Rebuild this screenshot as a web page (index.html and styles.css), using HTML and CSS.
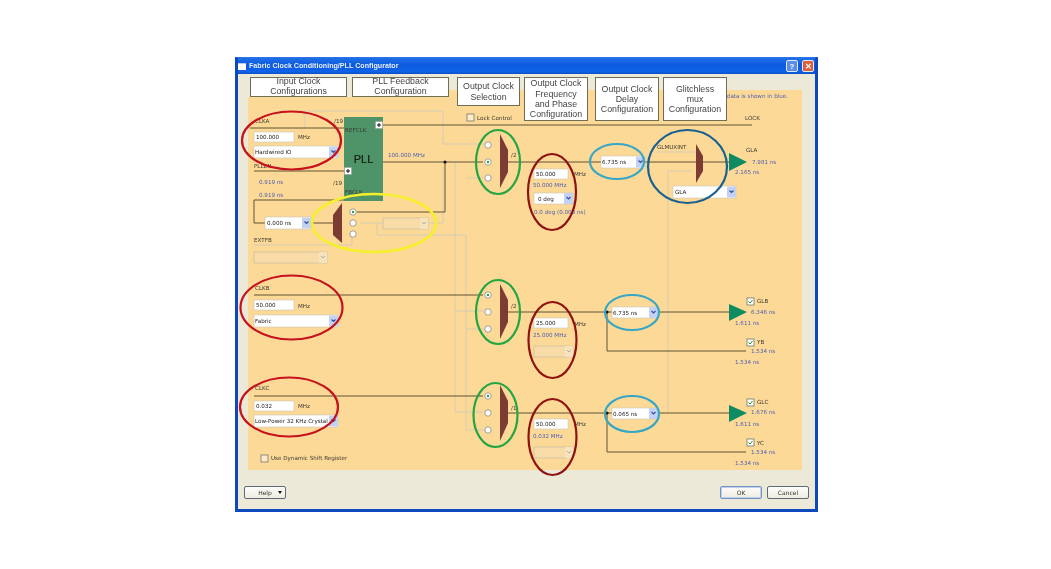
FILE: index.html
```html
<!DOCTYPE html>
<html lang="en">
<head>
<meta charset="utf-8">
<title>Fabric Clock Conditioning/PLL Configurator</title>
<link rel="stylesheet" href="styles.css">
</head>
<body>
<div class="window">
  <div class="titlebar">
    <span class="app-icon"></span>
    <span class="title">Fabric Clock Conditioning/PLL Configurator</span>
    <span class="cap cap-help">?</span>
    <span class="cap cap-close">✕</span>
  </div>
  <div class="client">
    <div class="canvas">
      <svg class="diagram" width="577" height="404" viewBox="238 74 577 404" xmlns="http://www.w3.org/2000/svg">
        <defs>
          <g id="arrow"><rect class="btn" x="-9" y="0" width="9" height="11"/><path class="chev" d="M-6.5 4l2 2 2-2"/></g>
          <g id="arrowd"><rect class="btn-off" x="-8" y="0" width="8" height="11"/><path class="chev-off" d="M-6 4l2 2 2-2"/></g>
          <g id="radio"><circle class="radio" r="3.2"/></g>
          <g id="radioon"><circle class="radio" r="3.2"/><circle class="radio-dot" r="1.2"/></g>
          <g id="check"><rect class="check" width="7" height="7" x="0" y="0"/><path class="tick" d="M1.5 3.5l1.5 1.5 2.5-3"/></g>
          <g id="plus"><rect class="plusbox" x="-3.5" y="-3.5" width="7" height="7"/><path class="plusmark" d="M-2 0h4M0-2v4"/></g>
        </defs>

        <path class="panel" d="M248 97H449V90H802V470H248Z"/>

        <!-- light routing -->
        <g class="wire-light">
          <path d="M305 128V111H443V144H483"/>
          <path d="M360 223H383M428 223H443V167"/>
          <path d="M254 245H352V236"/>
          <path d="M377 223V235H466V430H483"/>
          <path d="M466 178H483"/>
          <path d="M455 162V412H483M455 311H483M466 329H483"/>
          <path d="M657 152H696"/>
          <path d="M692 171H668V412"/>
        </g>

        <!-- dark routing -->
        <g class="wire">
          <path d="M250 128H344M379 125H752"/>
          <path d="M254 171H344"/>
          <path d="M383 162H483M508 162H729"/>
          <path d="M445 162V212H357"/>
          <path d="M344 200H254V223H265M311 223H333"/>
          <path d="M254 295H483M508 312H729M607 312V351H746"/>
          <path d="M254 396H483M508 413H729M607 413V452H746"/>
        </g>
        <circle class="node" cx="445" cy="162" r="1.6"/>
        <circle class="node" cx="607" cy="312" r="1.6"/>
        <circle class="node" cx="607" cy="413" r="1.6"/>

        <!-- PLL block -->
        <rect class="pll" x="344" y="117" width="39" height="84"/>
        <text class="pll-name" x="363.500" y="159">PLL</text>
        <text class="lbl" x="345" y="130">REFCLK</text>
        <text class="lbl" x="345" y="192">FBCLK</text>
        <use href="#plus" x="379" y="125"/>
        <use href="#plus" x="348" y="171"/>

        <!-- muxes -->
        <path class="mux" d="M500 134L508 150V172L500 188Z"/>
        <path class="mux" d="M342 203L333 215V235L342 243Z"/>
        <path class="mux" d="M696 144L703 156V171L696 183Z"/>
        <path class="mux" d="M500 284L508 300V322L500 339Z"/>
        <path class="mux" d="M500 385L508 401V423L500 441Z"/>

        <!-- radios -->
        <use href="#radio" x="488" y="145"/>
        <use href="#radioon" x="488" y="162"/>
        <use href="#radio" x="488" y="178"/>
        <use href="#radioon" x="353" y="212"/>
        <use href="#radio" x="353" y="223"/>
        <use href="#radio" x="353" y="234"/>
        <use href="#radioon" x="488" y="295"/>
        <use href="#radio" x="488" y="312"/>
        <use href="#radio" x="488" y="329"/>
        <use href="#radioon" x="488" y="396"/>
        <use href="#radio" x="488" y="413"/>
        <use href="#radio" x="488" y="430"/>

        <!-- outputs -->
        <path class="buf" d="M729 153L747 162L729 171Z"/>
        <path class="buf" d="M729 304L747 312L729 321Z"/>
        <path class="buf" d="M729 405L747 413L729 422Z"/>

        <!-- labels -->
        <text class="lbl" x="255" y="121">CLKA</text>
        <text class="lbl" x="254" y="166">PLLEN</text>
        <text class="lbl" x="254" y="240">EXTFB</text>
        <text class="lbl" x="255" y="288">CLKB</text>
        <text class="lbl" x="255" y="388">CLKC</text>
        <text class="lbl" x="334" y="121">/19</text>
        <text class="lbl" x="333" y="183">/19</text>
        <text class="lbl" x="511" y="155">/2</text>
        <text class="lbl" x="511" y="306">/2</text>
        <text class="lbl" x="511" y="408">/1</text>
        <text class="lbl" x="745" y="118">LOCK</text>
        <text class="lbl" x="657" y="147">GLMUXINT</text>
        <text class="lbl" x="746" y="150">GLA</text>
        <text class="lbl" x="757" y="301">GLB</text>
        <text class="lbl" x="757" y="342">YB</text>
        <text class="lbl" x="757" y="402">GLC</text>
        <text class="lbl" x="757" y="443">YC</text>
        <text class="lbl" x="298" y="137">MHz</text>
        <text class="lbl" x="298" y="306">MHz</text>
        <text class="lbl" x="298" y="406">MHz</text>
        <text class="lbl" x="574" y="174">MHz</text>
        <text class="lbl" x="574" y="324">MHz</text>
        <text class="lbl" x="574" y="424">MHz</text>
        <text class="lbl" x="477" y="118">Lock Control</text>
        <text class="lbl" x="271" y="458">Use Dynamic Shift Register</text>

        <!-- computed values -->
        <text class="val end" x="788" y="96">data is shown in blue.</text>
        <text class="val" x="259" y="182">0.919 ns</text>
        <text class="val" x="259" y="195">0.919 ns</text>
        <text class="val" x="388" y="155">100.000 MHz</text>
        <text class="val" x="533" y="185">50.000 MHz</text>
        <text class="val" x="534" y="212">0.0 deg (0.000 ns)</text>
        <text class="val" x="533" y="335">25.000 MHz</text>
        <text class="val" x="533" y="436">0.032 MHz</text>
        <text class="val" x="752" y="162">7.981 ns</text>
        <text class="val" x="735" y="172">2.165 ns</text>
        <text class="val" x="751" y="312">6.346 ns</text>
        <text class="val" x="735" y="323">1.611 ns</text>
        <text class="val" x="751" y="351">1.534 ns</text>
        <text class="val" x="735" y="362">1.534 ns</text>
        <text class="val" x="751" y="412">1.676 ns</text>
        <text class="val" x="735" y="424">1.611 ns</text>
        <text class="val" x="751" y="452">1.534 ns</text>
        <text class="val" x="735" y="463">1.534 ns</text>

        <!-- text inputs -->
        <rect class="field" x="254" y="132" width="40" height="10"/><text class="ctl" x="256" y="137">100.000</text>
        <rect class="field" x="254" y="300" width="40" height="10"/><text class="ctl" x="256" y="305">50.000</text>
        <rect class="field" x="254" y="401" width="40" height="10"/><text class="ctl" x="256" y="406">0.032</text>
        <rect class="field" x="534" y="169" width="34" height="10"/><text class="ctl" x="536" y="174">50.000</text>
        <rect class="field" x="534" y="318" width="34" height="10"/><text class="ctl" x="536" y="323">25.000</text>
        <rect class="field" x="534" y="419" width="34" height="10"/><text class="ctl" x="536" y="424">50.000</text>

        <!-- selects -->
        <rect class="field" x="254" y="146" width="84" height="12"/><text class="ctl" x="255" y="152">Hardwired IO</text><use href="#arrow" x="338" y="146.500"/>
        <rect class="field" x="254" y="315" width="84" height="12"/><text class="ctl" x="255" y="321">Fabric</text><use href="#arrow" x="338" y="315.500"/>
        <rect class="field" x="254" y="415" width="84" height="12"/><text class="ctl" x="255" y="421">Low-Power 32 KHz Crystal</text><use href="#arrow" x="338" y="415.500"/>
        <rect class="field" x="265" y="217" width="46" height="12"/><text class="ctl" x="267" y="223">0.000 ns</text><use href="#arrow" x="311" y="217.500"/>
        <rect class="field" x="534" y="193" width="39" height="11"/><text class="ctl" x="538" y="198.500">0 deg</text><use href="#arrow" x="573" y="193"/>
        <rect class="field" x="601" y="156" width="44" height="12"/><text class="ctl" x="602" y="162">6.735 ns</text><use href="#arrow" x="645" y="156.500"/>
        <rect class="field" x="612" y="307" width="46" height="11"/><text class="ctl" x="613" y="312.500">6.735 ns</text><use href="#arrow" x="658" y="307"/>
        <rect class="field" x="612" y="408" width="46" height="11"/><text class="ctl" x="613" y="413.500">0.065 ns</text><use href="#arrow" x="658" y="408"/>
        <rect class="field" x="673" y="186" width="63" height="12"/><text class="ctl" x="675" y="192">GLA</text><use href="#arrow" x="736" y="186.500"/>

        <!-- disabled selects -->
        <rect class="field-off" x="383" y="218" width="45" height="11"/><use href="#arrowd" x="428" y="218"/>
        <rect class="field-off" x="254" y="252" width="73" height="11"/><use href="#arrowd" x="327" y="252"/>
        <rect class="field-off" x="534" y="346" width="39" height="11"/><use href="#arrowd" x="573" y="346"/>
        <rect class="field-off" x="534" y="447" width="39" height="11"/><use href="#arrowd" x="573" y="447"/>

        <!-- check boxes -->
        <rect class="box" x="467" y="114" width="7" height="7"/>
        <rect class="box" x="261" y="455" width="7" height="7"/>
        <use href="#check" x="747" y="298"/>
        <use href="#check" x="747" y="339"/>
        <use href="#check" x="747" y="399"/>
        <use href="#check" x="747" y="439"/>

        <!-- annotations -->
        <ellipse class="ring red" cx="291.500" cy="140.500" rx="49.500" ry="29"/>
        <ellipse class="ring red" cx="291.500" cy="307.500" rx="51" ry="32"/>
        <ellipse class="ring red" cx="289" cy="407" rx="49" ry="29.500"/>
        <ellipse class="ring yellow" cx="374" cy="223" rx="62" ry="29"/>
        <ellipse class="ring green" cx="498" cy="162" rx="22" ry="32"/>
        <ellipse class="ring green" cx="498" cy="312" rx="22" ry="32"/>
        <ellipse class="ring green" cx="495.500" cy="415" rx="22" ry="32"/>
        <ellipse class="ring maroon" cx="552" cy="192" rx="24" ry="38"/>
        <ellipse class="ring maroon" cx="552.500" cy="340" rx="24" ry="38"/>
        <ellipse class="ring maroon" cx="552.500" cy="437" rx="24" ry="38"/>
        <ellipse class="ring cyan" cx="617" cy="161.500" rx="27" ry="17.500"/>
        <ellipse class="ring cyan" cx="632" cy="312.500" rx="27" ry="17.500"/>
        <ellipse class="ring cyan" cx="632" cy="414" rx="27" ry="18"/>
        <ellipse class="ring navy" cx="687.500" cy="166.500" rx="39.500" ry="36.500"/>
      </svg>
      <div class="tabs">
        <div class="tab tab-input"><span>Input Clock<br>Configurations</span></div>
        <div class="tab tab-feedback"><span>PLL Feedback<br>Configuration</span></div>
        <div class="tab tab-select"><span>Output Clock<br>Selection</span></div>
        <div class="tab tab-freq"><span>Output Clock<br>Frequency<br>and Phase<br>Configuration</span></div>
        <div class="tab tab-delay"><span>Output Clock<br>Delay<br>Configuration</span></div>
        <div class="tab tab-mux"><span>Glitchless<br>mux<br>Configuration</span></div>
      </div>
    </div>
    <div class="footer">
      <button class="push help" type="button">Help<span class="caret"></span></button>
      <span class="spacer"></span>
      <button class="push ok" type="button">OK</button>
      <button class="push" type="button">Cancel</button>
    </div>
  </div>
</div>
</body>
</html>
```

FILE: styles.css
```css
html, body { margin: 0; padding: 0; background: #fff; }
body { width: 1051px; height: 569px; overflow: hidden; padding-top: 57px; box-sizing: border-box; }

.window {
  width: 583px;
  height: 455px;
  margin-left: 235px;
  box-sizing: border-box;
  border: 3px solid #0f47bd;
  border-top: 1px solid #2c74e8;
  display: flex;
  flex-direction: column;
  background: #ece9d8;
  font-family: "Liberation Sans", Arial, sans-serif;
  filter: blur(.3px);
}

.titlebar {
  height: 16px;
  flex: none;
  display: flex;
  align-items: center;
  gap: 3px;
  padding-right: 1px;
  background: linear-gradient(#1f6fe6, #0c5ae0 45%, #0f62e8 85%, #0b4fc4);
}
.app-icon { width: 8px; height: 6px; background: #fff; border-top: 1px solid #bcd; flex: none; }
.title {
  flex: 1;
  color: #e8eefc;
  font: bold 7.150px "Liberation Sans", sans-serif;
  white-space: nowrap;
}
.cap {
  width: 10px; height: 10px; flex: none;
  display: flex; align-items: center; justify-content: center;
  border: 1px solid #dfe8fb; border-radius: 2px;
  color: #fff; font: bold 8px "Liberation Sans", sans-serif;
}
.cap-help { background: #5b8ce6; }
.cap-close { background: #d9603a; margin-left: 1px; }

.client { flex: 1; display: flex; flex-direction: column; min-height: 0; }
.canvas { position: relative; height: 404px; flex: none; }
.diagram { display: block; }

.panel { fill: #fdd998; }
.wire { fill: none; stroke: #5e5232; stroke-width: 1; }
.wire-light { fill: none; stroke: #d3ccb4; stroke-width: 1; }
.node { fill: #111; }
.pll { fill: #4f9469; }
.pll-name { font: 11px "Liberation Sans", sans-serif; fill: #101c10; stroke: #101c10; stroke-width: .2; text-anchor: middle; dominant-baseline: central; }
.mux { fill: #7c3b33; }
.buf { fill: #0f8b62; }
.radio { fill: #fff; stroke: #8a8a80; stroke-width: .8; }
.radio-dot { fill: #2d9c45; }
.plusbox { fill: #fff; stroke: #999; stroke-width: .5; }
.plusmark { stroke: #111; stroke-width: 1; fill: none; }

.lbl, .val, .ctl {
  font-family: "DejaVu Sans", sans-serif;
  font-size: 5.600px;
  dominant-baseline: central;
}
.lbl { fill: #3b3a30; }
.val { fill: #4c5fb0; }
.ctl { fill: #222; }
.end { text-anchor: end; }

.field { fill: #fff; stroke: #c9c5b4; stroke-width: .6; }
.field-off { fill: #f8dba6; stroke: #c6bea6; stroke-width: .7; }
.btn { fill: #c3d2f3; }
.btn-off { fill: #f5e3c0; }
.chev { fill: none; stroke: #33509e; stroke-width: 1.200; }
.chev-off { fill: none; stroke: #b7ad97; stroke-width: 1; }
.box { fill: #fdeccb; stroke: #77766a; stroke-width: .8; }
.check { fill: #fff; stroke: #6f7a6a; stroke-width: .8; }
.tick { fill: none; stroke: #1f8f3f; stroke-width: 1; }

.ring { fill: none; stroke-width: 2.200; }
.red { stroke: #c5121c; }
.yellow { stroke: #f6f02c; stroke-width: 2.600; }
.green { stroke: #23a642; }
.maroon { stroke: #8f1212; }
.cyan { stroke: #36a7c6; }
.navy { stroke: #17608f; }

.tabs {
  position: absolute;
  left: 12px;
  top: 3px;
  display: flex;
  align-items: flex-start;
}
.tab {
  box-sizing: border-box;
  background: #fff;
  border: 1px solid #6e6e55;
  color: #444;
  font: 8.800px/10.300px "Liberation Sans", Arial, sans-serif;
  text-align: center;
  display: flex;
  align-items: center;
  justify-content: center;
}
.tab-input { width: 97px; height: 20px; margin-right: 5px; }
.tab-feedback { width: 97px; height: 20px; margin-right: 8px; }
.tab-input span, .tab-feedback span { margin-top: -2px; }
.tab-select { width: 63px; height: 29px; margin-right: 4px; }
.tab-freq { width: 64px; height: 44px; margin-right: 7px; }
.tab-delay { width: 64px; height: 44px; margin-right: 4px; }
.tab-mux { width: 64px; height: 44px; }

.footer {
  flex: 1;
  display: flex;
  align-items: flex-start;
  gap: 5px;
  padding: 8px 6px 0 6px;
}
.spacer { flex: 1; }
.push {
  width: 42px;
  height: 13px;
  padding: 0;
  box-sizing: border-box;
  background: linear-gradient(#fdfdfb, #efecdf);
  border: 1px solid #5f6a78;
  border-radius: 2px;
  color: #333;
  font: 6px "DejaVu Sans", sans-serif;
  position: relative;
}
.ok { border-color: #7793bf; box-shadow: inset 0 0 0 1px #bcd0ee; }
.caret {
  position: absolute;
  right: 3px;
  top: 4px;
  border: 2px solid transparent;
  border-top: 3px solid #111;
  border-bottom: 0;
}
```
